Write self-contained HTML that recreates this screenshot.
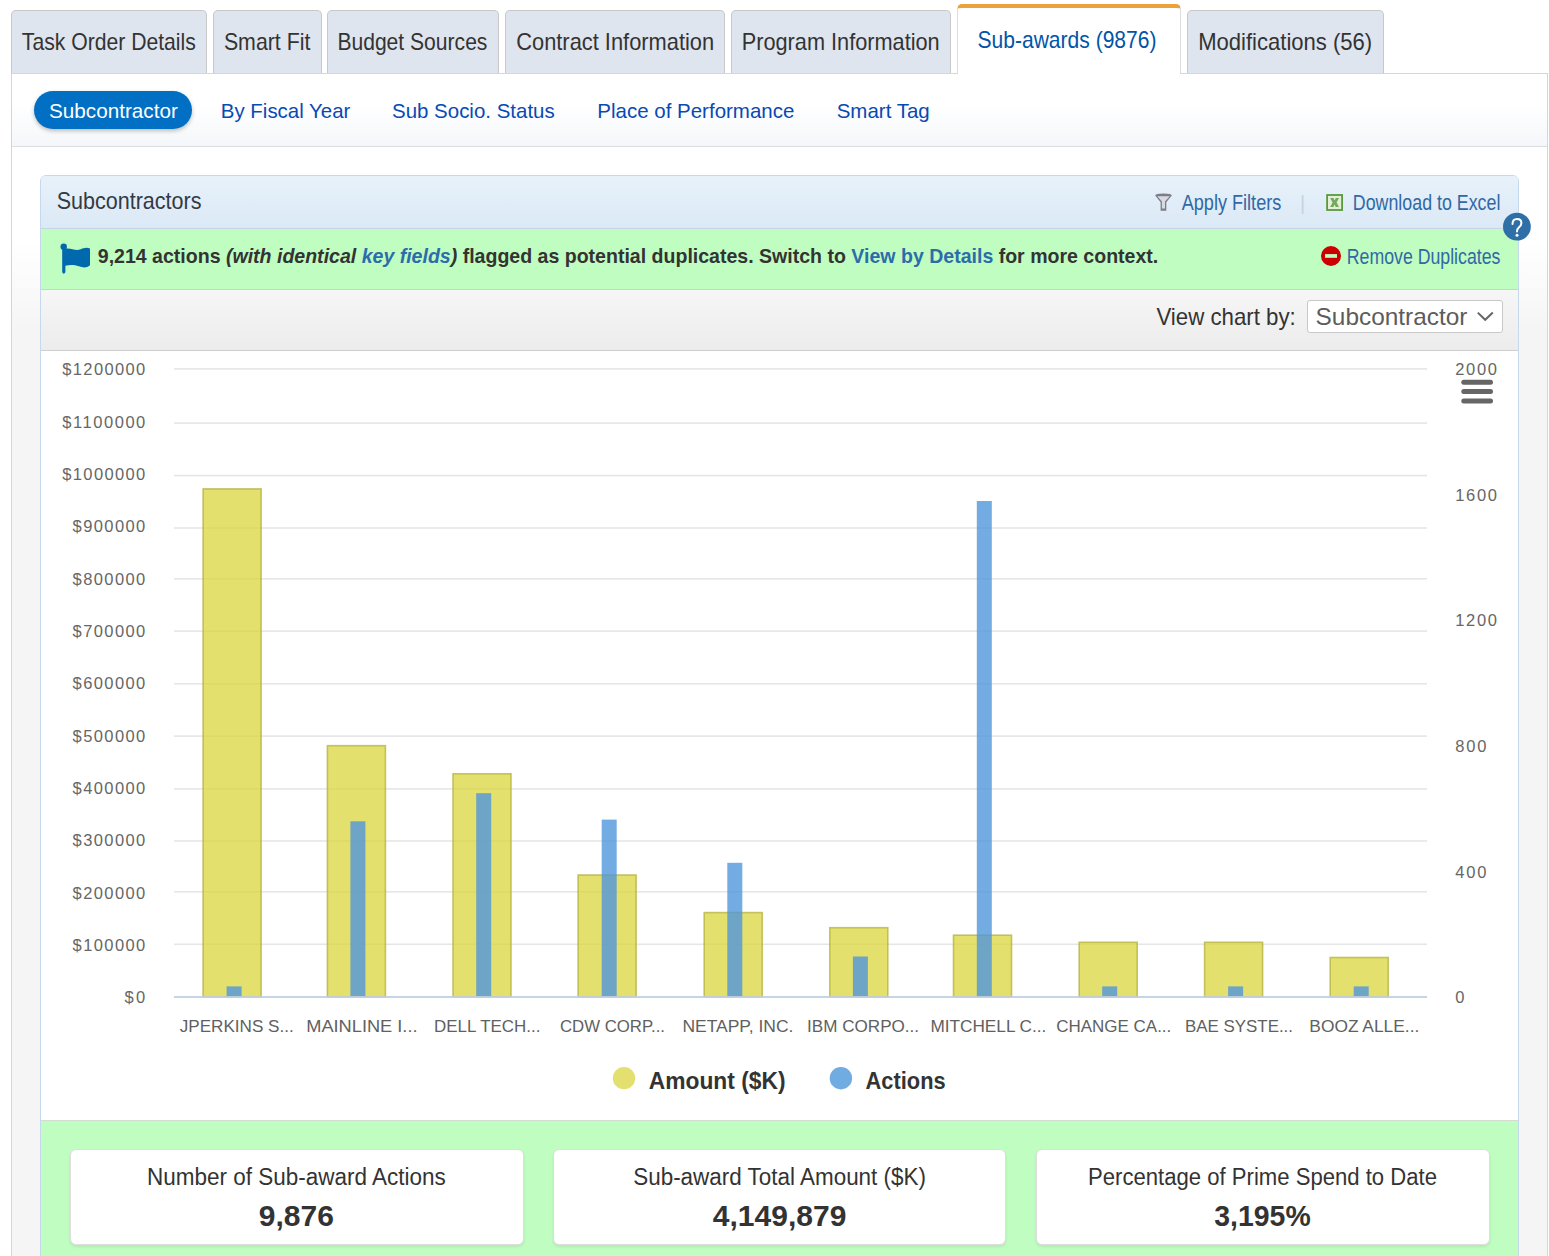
<!DOCTYPE html>
<html><head><meta charset="utf-8"><title>Sub-awards</title><style>
*{margin:0;padding:0;box-sizing:border-box}
html,body{width:1549px;height:1256px;overflow:hidden;background:#fff;font-family:"Liberation Sans", sans-serif}
.abs{position:absolute}
.tab{position:absolute;top:10px;height:63px;background:#dee5ef;border:1px solid #c8c8c8;border-bottom:none;border-radius:5px 5px 0 0}
.tab.active{top:4px;height:70px;background:#fff;border:1px solid #dcdcdc;border-top:4px solid #eba23c;border-bottom:none;z-index:3}
#outer{position:absolute;left:11px;top:73px;width:1537px;height:1300px;border:1px solid #d6d6d6;background:linear-gradient(#fff 167px,#f5f5f5 257px)}
#subnav{position:absolute;left:12px;top:74px;width:1535px;height:73px;background:linear-gradient(#fff 42%,#f4f7fa);border-bottom:1px solid #dcdee0}
#pill{position:absolute;left:34px;top:91px;width:158px;height:38px;border-radius:19px;background:#006fc4;box-shadow:0 2px 4px rgba(0,0,0,.25)}
#panel{position:absolute;left:40px;top:175px;width:1479px;height:1200px;border:1px solid #c6d9ec;border-radius:6px 6px 0 0;background:#fff;overflow:hidden}
#hdr{position:absolute;left:0;top:0;width:100%;height:53px;background:linear-gradient(#e7f1fa,#dbe9f6);border-bottom:1px solid #c5d5e6}
#alert{position:absolute;left:0;top:53px;width:100%;height:61px;background:#c0fdc0;border-bottom:1px solid #c9d3c9}
#grey{position:absolute;left:0;top:114px;width:100%;height:61px;background:linear-gradient(#f6f6f6,#ececec);border-bottom:1px solid #cfcfcf}
#stats{position:absolute;left:0;top:944px;width:100%;height:300px;background:#c0fdc0;border-top:1px solid #d3dbd3}
#sel{position:absolute;left:1307px;top:300px;width:196px;height:33px;background:#fff;border:1px solid #c8c8c8;border-radius:3px}
.card{position:absolute;top:1149px;height:96px;background:#fff;border:1px solid #e0dde0;border-radius:6px;box-shadow:0 2px 3px rgba(0,0,0,.08)}
svg{position:absolute;left:0;top:0}
text{font-family:"Liberation Sans", sans-serif}
</style></head>
<body>
<div id="outer"></div>
<div id="subnav"></div>
<div class="tab" style="left:11px;width:196px"></div><div class="tab" style="left:213px;width:109px"></div><div class="tab" style="left:327px;width:172px"></div><div class="tab" style="left:505px;width:220px"></div><div class="tab" style="left:731px;width:220px"></div><div class="tab" style="left:1187px;width:197px"></div><div class="tab active" style="left:957px;width:224px"></div>

<div id="pill"></div>
<div id="panel"><div id="hdr"></div><div id="alert"></div><div id="grey"></div><div id="stats"></div></div>
<div id="sel"></div>
<div class="card" style="left:70px;width:454px"></div><div class="card" style="left:553px;width:453px"></div><div class="card" style="left:1036px;width:454px"></div>
<svg width="1549" height="1256" viewBox="0 0 1549 1256" style="z-index:10">
<rect x="174" y="368.10" width="1253" height="1.6" fill="#e6e6e6"/><rect x="174" y="422.30" width="1253" height="1.6" fill="#e6e6e6"/><rect x="174" y="474.80" width="1253" height="1.6" fill="#e6e6e6"/><rect x="174" y="527.20" width="1253" height="1.6" fill="#e6e6e6"/><rect x="174" y="578.00" width="1253" height="1.6" fill="#e6e6e6"/><rect x="174" y="630.30" width="1253" height="1.6" fill="#e6e6e6"/><rect x="174" y="683.00" width="1253" height="1.6" fill="#e6e6e6"/><rect x="174" y="735.30" width="1253" height="1.6" fill="#e6e6e6"/><rect x="174" y="788.10" width="1253" height="1.6" fill="#e6e6e6"/><rect x="174" y="840.20" width="1253" height="1.6" fill="#e6e6e6"/><rect x="174" y="891.00" width="1253" height="1.6" fill="#e6e6e6"/><rect x="174" y="943.50" width="1253" height="1.6" fill="#e6e6e6"/><rect x="203.10" y="488.90" width="58.0" height="508.10" fill="rgba(218,214,60,0.75)" stroke="rgba(180,176,60,0.75)" stroke-width="1.6"/><rect x="327.40" y="745.70" width="58.0" height="251.30" fill="rgba(218,214,60,0.75)" stroke="rgba(180,176,60,0.75)" stroke-width="1.6"/><rect x="453.00" y="773.80" width="58.0" height="223.20" fill="rgba(218,214,60,0.75)" stroke="rgba(180,176,60,0.75)" stroke-width="1.6"/><rect x="578.10" y="875.00" width="58.0" height="122.00" fill="rgba(218,214,60,0.75)" stroke="rgba(180,176,60,0.75)" stroke-width="1.6"/><rect x="704.20" y="912.60" width="58.0" height="84.40" fill="rgba(218,214,60,0.75)" stroke="rgba(180,176,60,0.75)" stroke-width="1.6"/><rect x="829.80" y="927.70" width="58.0" height="69.30" fill="rgba(218,214,60,0.75)" stroke="rgba(180,176,60,0.75)" stroke-width="1.6"/><rect x="953.50" y="935.20" width="58.0" height="61.80" fill="rgba(218,214,60,0.75)" stroke="rgba(180,176,60,0.75)" stroke-width="1.6"/><rect x="1079.20" y="942.30" width="58.0" height="54.70" fill="rgba(218,214,60,0.75)" stroke="rgba(180,176,60,0.75)" stroke-width="1.6"/><rect x="1204.60" y="942.30" width="58.0" height="54.70" fill="rgba(218,214,60,0.75)" stroke="rgba(180,176,60,0.75)" stroke-width="1.6"/><rect x="1330.20" y="957.50" width="58.0" height="39.50" fill="rgba(218,214,60,0.75)" stroke="rgba(180,176,60,0.75)" stroke-width="1.6"/><rect x="226.60" y="986.40" width="15" height="10.60" fill="rgba(80,150,220,0.8)"/><rect x="350.40" y="821.30" width="15" height="175.70" fill="rgba(80,150,220,0.8)"/><rect x="476.20" y="793.20" width="15" height="203.80" fill="rgba(80,150,220,0.8)"/><rect x="601.70" y="819.60" width="15" height="177.40" fill="rgba(80,150,220,0.8)"/><rect x="727.30" y="862.80" width="15" height="134.20" fill="rgba(80,150,220,0.8)"/><rect x="852.90" y="956.50" width="15" height="40.50" fill="rgba(80,150,220,0.8)"/><rect x="976.80" y="501.00" width="15" height="496.00" fill="rgba(80,150,220,0.8)"/><rect x="1102.20" y="986.40" width="15" height="10.60" fill="rgba(80,150,220,0.8)"/><rect x="1228.10" y="986.40" width="15" height="10.60" fill="rgba(80,150,220,0.8)"/><rect x="1353.70" y="986.40" width="15" height="10.60" fill="rgba(80,150,220,0.8)"/><rect x="174" y="996.10" width="1253" height="1.8" fill="#c0d0e0"/><rect x="1461.3" y="379.7" width="31.7" height="5" rx="2.5" fill="#666"/><rect x="1461.3" y="389.0" width="31.7" height="5" rx="2.5" fill="#666"/><rect x="1461.3" y="398.4" width="31.7" height="5" rx="2.5" fill="#666"/><circle cx="624" cy="1078.2" r="11.2" fill="#e4e070"/><circle cx="840.9" cy="1078.2" r="11.2" fill="#70ace2"/>
<path d="M62.2 247 L62.2 272.3 Q63.8 275 65.4 272.3 L65.4 265.8 C70 264.5 74 264.6 79 266.3 C84 268.2 87 267.6 90 265.2 L90 248.5 C87 247 84 247.5 80 249.6 C75 251.2 71 247.5 65.4 248.6 L65.4 247 Z" fill="#0068ac"/><circle cx="63.7" cy="246.8" r="3.2" fill="#0068ac"/><path d="M1155.2 195.6 Q1155.2 193.6 1163.5 193.6 Q1171.8 193.6 1171.8 195.6 L1166.3 202.2 L1166.3 210.7 L1160.6 210.7 L1160.6 202.2 Z" fill="#7b7e86"/><path d="M1157.3 196.3 L1169.7 196.3 L1165 201.6 L1165 208.6 L1161.9 208.6 L1161.9 201.6 Z" fill="#d9d9e2"/><rect x="1326.2" y="194.1" width="16.8" height="16.8" fill="#5a9a3a"/><rect x="1328" y="195.9" width="13.2" height="13.2" fill="#e2f0da"/><path d="M1330.2 198 L1333.4 198 L1334.6 200.6 L1335.8 198 L1339 198 L1336.6 202.5 L1339 207 L1335.8 207 L1334.6 204.4 L1333.4 207 L1330.2 207 L1332.6 202.5 Z" fill="#74a85a"/><circle cx="1331" cy="256" r="10" fill="#cc0000"/><rect x="1325" y="254.1" width="12" height="3.7" fill="#c0fdc0"/><circle cx="1516.9" cy="226.7" r="13.9" fill="#2e6fa8"/><path d="M1512.5 224 Q1512.5 218.9 1517 218.9 Q1521.4 218.9 1521.4 223 Q1521.4 225.5 1518.8 227.5 Q1517 229 1517 231.5" fill="none" stroke="#fff" stroke-width="2" stroke-linecap="round"/><circle cx="1517" cy="235.2" r="1.5" fill="#fff"/><path d="M1477.8 312.6 L1485.2 319.8 L1492.8 312.6" fill="none" stroke="#666" stroke-width="2"/>
<text x="21.8" y="50.0" text-anchor="start" style="font-size:24px;fill:#333;" textLength="174.0" lengthAdjust="spacingAndGlyphs">Task Order Details</text><text x="223.9" y="50.0" text-anchor="start" style="font-size:24px;fill:#333;" textLength="86.5" lengthAdjust="spacingAndGlyphs">Smart Fit</text><text x="337.4" y="50.0" text-anchor="start" style="font-size:24px;fill:#333;" textLength="150.0" lengthAdjust="spacingAndGlyphs">Budget Sources</text><text x="516.2" y="50.0" text-anchor="start" style="font-size:24px;fill:#333;" textLength="198.0" lengthAdjust="spacingAndGlyphs">Contract Information</text><text x="741.7" y="50.0" text-anchor="start" style="font-size:24px;fill:#333;" textLength="198.0" lengthAdjust="spacingAndGlyphs">Program Information</text><text x="1198.2" y="50.0" text-anchor="start" style="font-size:24px;fill:#333;" textLength="174.0" lengthAdjust="spacingAndGlyphs">Modifications (56)</text><text x="977.5" y="48.0" text-anchor="start" style="font-size:24px;fill:#0055aa;" textLength="179.0" lengthAdjust="spacingAndGlyphs">Sub-awards (9876)</text><text x="49.0" y="118.0" text-anchor="start" style="font-size:21px;fill:#fff;" textLength="128.8" lengthAdjust="spacingAndGlyphs">Subcontractor</text><text x="220.8" y="118.0" text-anchor="start" style="font-size:21px;fill:#0849b5;" textLength="129.6" lengthAdjust="spacingAndGlyphs">By Fiscal Year</text><text x="392.0" y="118.0" text-anchor="start" style="font-size:21px;fill:#0849b5;" textLength="162.7" lengthAdjust="spacingAndGlyphs">Sub Socio. Status</text><text x="597.3" y="118.0" text-anchor="start" style="font-size:21px;fill:#0849b5;" textLength="197.1" lengthAdjust="spacingAndGlyphs">Place of Performance</text><text x="836.7" y="118.0" text-anchor="start" style="font-size:21px;fill:#0849b5;" textLength="93.0" lengthAdjust="spacingAndGlyphs">Smart Tag</text><text x="56.7" y="209.0" text-anchor="start" style="font-size:24px;fill:#333a44;" textLength="144.8" lengthAdjust="spacingAndGlyphs">Subcontractors</text><text x="1181.7" y="210.0" text-anchor="start" style="font-size:22px;fill:#3069a5;" textLength="99.6" lengthAdjust="spacingAndGlyphs">Apply Filters</text><text x="1300.0" y="210.0" text-anchor="start" style="font-size:20px;fill:#c6d3df;">|</text><text x="1352.8" y="210.0" text-anchor="start" style="font-size:22px;fill:#3069a5;" textLength="147.6" lengthAdjust="spacingAndGlyphs">Download to Excel</text><text x="97.8" y="263.4" text-anchor="start" style="font-size:21px;fill:#333;font-weight:bold;" textLength="1060.5" lengthAdjust="spacingAndGlyphs"><tspan>9,214 actions </tspan><tspan font-style="italic">(with identical </tspan><tspan font-style="italic" fill="#2c6cab">key fields</tspan><tspan font-style="italic">)</tspan><tspan> flagged as potential duplicates. Switch to </tspan><tspan fill="#2c6cab">View by Details</tspan><tspan> for more context.</tspan></text><text x="1346.8" y="264.0" text-anchor="start" style="font-size:22px;fill:#3069a5;" textLength="153.6" lengthAdjust="spacingAndGlyphs">Remove Duplicates</text><text x="1156.4" y="325.0" text-anchor="start" style="font-size:24px;fill:#333;" textLength="139.4" lengthAdjust="spacingAndGlyphs">View chart by:</text><text x="1315.6" y="325.0" text-anchor="start" style="font-size:24px;fill:#5c5c5c;" textLength="151.8" lengthAdjust="spacingAndGlyphs">Subcontractor</text><text x="145.3" y="375.2" text-anchor="end" style="font-size:16.5px;fill:#666;" textLength="83.1" lengthAdjust="spacing">$1200000</text><text x="145.3" y="427.5" text-anchor="end" style="font-size:16.5px;fill:#666;" textLength="83.1" lengthAdjust="spacing">$1100000</text><text x="145.3" y="479.9" text-anchor="end" style="font-size:16.5px;fill:#666;" textLength="83.1" lengthAdjust="spacing">$1000000</text><text x="145.3" y="532.2" text-anchor="end" style="font-size:16.5px;fill:#666;" textLength="72.7" lengthAdjust="spacing">$900000</text><text x="145.3" y="584.6" text-anchor="end" style="font-size:16.5px;fill:#666;" textLength="72.7" lengthAdjust="spacing">$800000</text><text x="145.3" y="636.9" text-anchor="end" style="font-size:16.5px;fill:#666;" textLength="72.7" lengthAdjust="spacing">$700000</text><text x="145.3" y="689.2" text-anchor="end" style="font-size:16.5px;fill:#666;" textLength="72.7" lengthAdjust="spacing">$600000</text><text x="145.3" y="741.6" text-anchor="end" style="font-size:16.5px;fill:#666;" textLength="72.7" lengthAdjust="spacing">$500000</text><text x="145.3" y="793.9" text-anchor="end" style="font-size:16.5px;fill:#666;" textLength="72.7" lengthAdjust="spacing">$400000</text><text x="145.3" y="846.3" text-anchor="end" style="font-size:16.5px;fill:#666;" textLength="72.7" lengthAdjust="spacing">$300000</text><text x="145.3" y="898.6" text-anchor="end" style="font-size:16.5px;fill:#666;" textLength="72.7" lengthAdjust="spacing">$200000</text><text x="145.3" y="951.0" text-anchor="end" style="font-size:16.5px;fill:#666;" textLength="72.7" lengthAdjust="spacing">$100000</text><text x="145.3" y="1003.3" text-anchor="end" style="font-size:16.5px;fill:#666;" textLength="20.8" lengthAdjust="spacing">$0</text><text x="1455.3" y="375.2" text-anchor="start" style="font-size:16.5px;fill:#666;" textLength="41.6" lengthAdjust="spacing">2000</text><text x="1455.3" y="500.8" text-anchor="start" style="font-size:16.5px;fill:#666;" textLength="41.6" lengthAdjust="spacing">1600</text><text x="1455.3" y="626.4" text-anchor="start" style="font-size:16.5px;fill:#666;" textLength="41.6" lengthAdjust="spacing">1200</text><text x="1455.3" y="752.1" text-anchor="start" style="font-size:16.5px;fill:#666;" textLength="31.2" lengthAdjust="spacing">800</text><text x="1455.3" y="877.7" text-anchor="start" style="font-size:16.5px;fill:#666;" textLength="31.2" lengthAdjust="spacing">400</text><text x="1455.3" y="1003.3" text-anchor="start" style="font-size:16.5px;fill:#666;" textLength="10.4" lengthAdjust="spacing">0</text><text x="236.7" y="1032.0" text-anchor="middle" style="font-size:16.5px;fill:#606060;" textLength="114.0" lengthAdjust="spacingAndGlyphs">JPERKINS S...</text><text x="361.9" y="1032.0" text-anchor="middle" style="font-size:16.5px;fill:#606060;" textLength="111.3" lengthAdjust="spacingAndGlyphs">MAINLINE I...</text><text x="487.2" y="1032.0" text-anchor="middle" style="font-size:16.5px;fill:#606060;" textLength="106.3" lengthAdjust="spacingAndGlyphs">DELL TECH...</text><text x="612.5" y="1032.0" text-anchor="middle" style="font-size:16.5px;fill:#606060;" textLength="105.0" lengthAdjust="spacingAndGlyphs">CDW CORP...</text><text x="737.9" y="1032.0" text-anchor="middle" style="font-size:16.5px;fill:#606060;" textLength="111.0" lengthAdjust="spacingAndGlyphs">NETAPP, INC.</text><text x="863.1" y="1032.0" text-anchor="middle" style="font-size:16.5px;fill:#606060;" textLength="112.0" lengthAdjust="spacingAndGlyphs">IBM CORPO...</text><text x="988.4" y="1032.0" text-anchor="middle" style="font-size:16.5px;fill:#606060;" textLength="116.0" lengthAdjust="spacingAndGlyphs">MITCHELL C...</text><text x="1113.8" y="1032.0" text-anchor="middle" style="font-size:16.5px;fill:#606060;" textLength="115.0" lengthAdjust="spacingAndGlyphs">CHANGE CA...</text><text x="1239.0" y="1032.0" text-anchor="middle" style="font-size:16.5px;fill:#606060;" textLength="108.0" lengthAdjust="spacingAndGlyphs">BAE SYSTE...</text><text x="1364.3" y="1032.0" text-anchor="middle" style="font-size:16.5px;fill:#606060;" textLength="110.0" lengthAdjust="spacingAndGlyphs">BOOZ ALLE...</text><text x="648.8" y="1088.7" text-anchor="start" style="font-size:23px;fill:#333;font-weight:bold;" textLength="136.7" lengthAdjust="spacingAndGlyphs">Amount ($K)</text><text x="865.6" y="1088.7" text-anchor="start" style="font-size:23px;fill:#333;font-weight:bold;" textLength="80.0" lengthAdjust="spacingAndGlyphs">Actions</text><text x="296.4" y="1184.5" text-anchor="middle" style="font-size:23.5px;fill:#333;" textLength="298.8" lengthAdjust="spacingAndGlyphs">Number of Sub-award Actions</text><text x="296.4" y="1225.8" text-anchor="middle" style="font-size:29px;fill:#333;font-weight:bold;" textLength="75.1" lengthAdjust="spacingAndGlyphs">9,876</text><text x="779.6" y="1184.5" text-anchor="middle" style="font-size:23.5px;fill:#333;" textLength="292.8" lengthAdjust="spacingAndGlyphs">Sub-award Total Amount ($K)</text><text x="779.6" y="1225.8" text-anchor="middle" style="font-size:29px;fill:#333;font-weight:bold;" textLength="133.6" lengthAdjust="spacingAndGlyphs">4,149,879</text><text x="1262.5" y="1184.5" text-anchor="middle" style="font-size:23.5px;fill:#333;" textLength="348.9" lengthAdjust="spacingAndGlyphs">Percentage of Prime Spend to Date</text><text x="1262.5" y="1225.8" text-anchor="middle" style="font-size:29px;fill:#333;font-weight:bold;" textLength="96.4" lengthAdjust="spacingAndGlyphs">3,195%</text>
</svg>
</body></html>
